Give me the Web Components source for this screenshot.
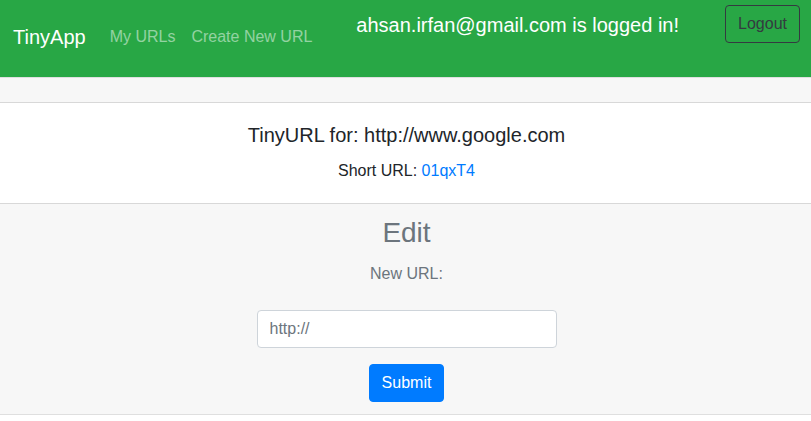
<!DOCTYPE html>
<html lang="en">
<head>
<meta charset="utf-8">
<meta name="viewport" content="width=device-width, initial-scale=1">
<title>TinyApp</title>
<style>
*{box-sizing:border-box}
body{margin:0;background:#fff;color:#212529;font:16px/24px "Liberation Sans",Arial,sans-serif}
</style>
</head>
<body>
<tiny-page>
  <tiny-navbar slot="top" user="ahsan.irfan@gmail.com"></tiny-navbar>
  <url-card long-url="http://www.google.com" short-url="01qxT4"></url-card>
</tiny-page>
<script>
class TinyPage extends HTMLElement {
  constructor() {
    super();
    this.attachShadow({mode: 'open'}).innerHTML = `
      <style>
        :host{display:block}
      </style>
      <slot name="top"></slot>
      <main><slot></slot></main>`;
  }
}
customElements.define('tiny-page', TinyPage);

class TinyNavbar extends HTMLElement {
  constructor() {
    super();
    this.attachShadow({mode: 'open'}).innerHTML = `
      <style>
        *{box-sizing:border-box}
        :host{display:block}
        nav{display:flex;justify-content:space-between;align-items:flex-start;background:#28a745;padding:5px 11px 13px 13px}
        .links{display:flex;align-items:center;align-self:stretch;padding-top:5px}
        a{color:rgba(255,255,255,.5);text-decoration:none}
        .brand{color:#fff;font-size:20px;line-height:30px;margin-right:16px}
        ul{display:flex;list-style:none;margin:0;padding:0}
        li a{display:block;padding:8px}
        .user{margin:0;padding:5px 10px 24px 0;color:#fff;font-size:20px;line-height:30px}
        button{font:inherit;color:#343a40;background:transparent;border:1px solid #343a40;border-radius:4px;padding:6px 12px}
      </style>
      <nav>
        <div class="links">
          <a class="brand" href="#">TinyApp</a>
          <ul><li><a href="#">My URLs</a></li><li><a href="#">Create New URL</a></li></ul>
        </div>
        <p class="user"></p>
        <button type="submit">Logout</button>
      </nav>`;
  }
  connectedCallback() {
    this.shadowRoot.querySelector('.user').textContent = `${this.getAttribute('user')} is logged in!`;
  }
}
customElements.define('tiny-navbar', TinyNavbar);

class UrlCard extends HTMLElement {
  constructor() {
    super();
    this.attachShadow({mode: 'open'}).innerHTML = `
      <style>
        *{box-sizing:border-box}
        :host{display:block;text-align:center;border:solid #dfdfdf;border-width:1px 0}
        header{padding:12px;background:#f7f7f7}
        .body{border:solid #d8d8d8;border-width:1px 0;padding:20px 20px 20px 22px}
        h5{margin:0 0 12px;font-size:20px;font-weight:400;line-height:24px}
        p{margin:0}
        a{color:#007bff;text-decoration:none}
        footer{background:#f7f7f7;color:#6c757d;padding:12px 20px 12px 22px}
        h3{margin:0 0 8px;font-size:28px;font-weight:400;line-height:34px}
        form{display:flex;flex-direction:column;align-items:center;margin:0}
        label{padding:4px 0;margin-bottom:20px}
        input{width:300px;max-width:100%;height:38px;font:inherit;color:#495057;background:#fff;border:1px solid #ced4da;border-radius:4px;padding:6px 12px;margin:0 0 16px}
        input::placeholder{color:#6c757d;opacity:1}
        button{font:inherit;color:#fff;background:#007bff;border:1px solid #007bff;border-radius:4px;padding:6px 12px}
      </style>
      <header></header>
      <div class="body">
        <h5></h5>
        <p>Short URL: <a></a></p>
      </div>
      <footer>
        <h3>Edit</h3>
        <form>
          <label for="url">New URL:</label>
          <input id="url" name="longURL" type="text" placeholder="http://">
          <button type="submit">Submit</button>
        </form>
      </footer>`;
  }
  connectedCallback() {
    const root = this.shadowRoot;
    const id = this.getAttribute('short-url');
    root.querySelector('h5').textContent = `TinyURL for: ${this.getAttribute('long-url')}`;
    const link = root.querySelector('a');
    link.textContent = id;
    link.href = `#${id}`;
  }
}
customElements.define('url-card', UrlCard);
</script>
</body>
</html>
